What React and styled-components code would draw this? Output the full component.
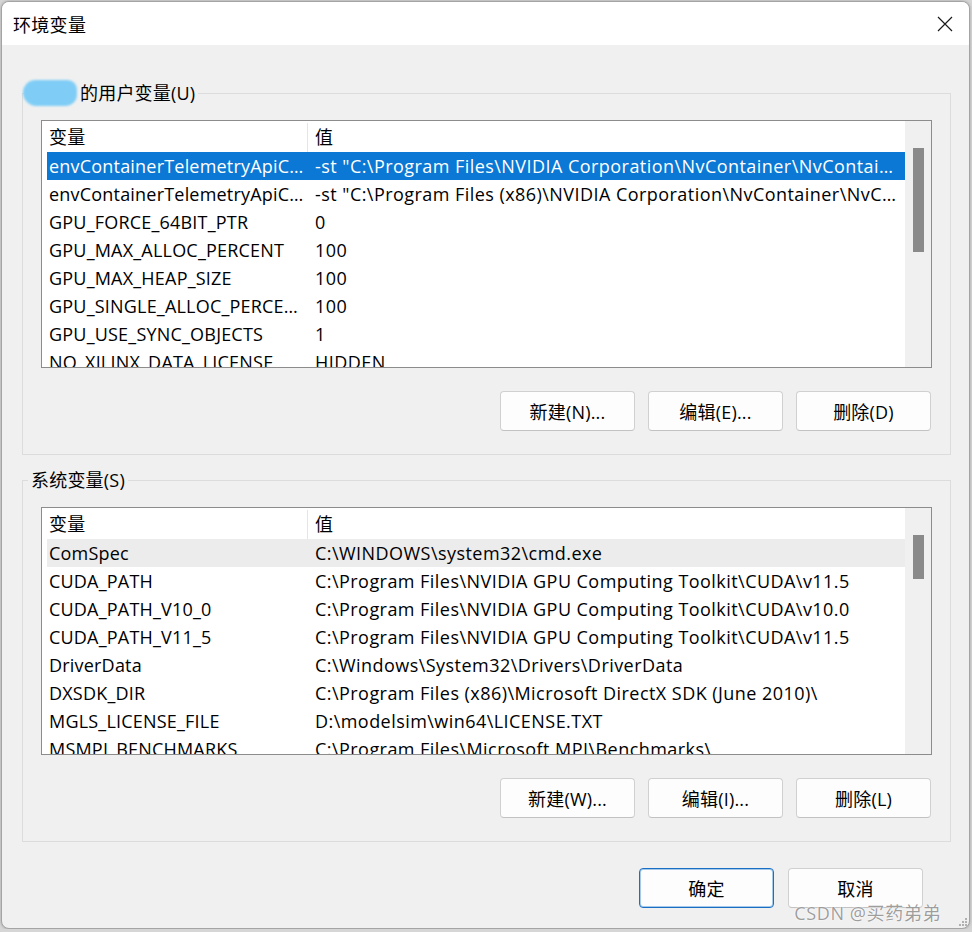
import React from "react";
import styled, { createGlobalStyle } from "styled-components";

const GlobalStyle = createGlobalStyle`
  html, body {
    margin: 0;
    padding: 0;
    background: #d6d6d6;
  }
  body {
    font-family: "Open Sans", "Noto Sans CJK SC", sans-serif;
    font-size: 18px;
    color: #000;
  }
  * { box-sizing: border-box; }
`;

const Window = styled.div`
  position: relative;
  margin: 1px 0 0 1px;
  width: 969px;
  height: 928px;
  border: 1px solid #a4a4a4;
  border-radius: 8px;
  overflow: hidden;
  background: #f0f0f0;
  display: flex;
  flex-direction: column;
  box-shadow: 0 0 3px rgba(0, 0, 0, 0.25);
`;

const TitleBar = styled.div`
  height: 43px;
  background: #fff;
  display: flex;
  align-items: center;
  justify-content: space-between;
  padding-left: 11px;
`;

const Title = styled.span`
  font-size: 18px;
  letter-spacing: 0.3px;
`;

const CloseButton = styled.div`
  width: 46px;
  height: 43px;
  display: flex;
  align-items: center;
  justify-content: center;
  margin-right: 1px;
`;

const Body = styled.div`
  flex: 1;
  display: flex;
  flex-direction: column;
  padding: 34px 18px 0 20px;
`;

const Group = styled.fieldset`
  margin: ${(p) => (p.$first ? "0" : "11px")} 0 0 0;
  padding: 0;
  border: 1px solid #dcdcdc;
  min-width: 0;
`;

const Legend = styled.legend`
  margin-left: 5px;
  padding: 0 3px;
  line-height: 28px;
  font-size: 18px;
  letter-spacing: 0.2px;
  display: flex;
  align-items: center;
`;

const Blur = styled.span`
  display: inline-block;
  width: 54px;
  height: 26px;
  margin-left: -8px;
  margin-right: 3px;
  border-radius: 13px 10px 12px 14px;
  background: #7fcdf6;
  filter: blur(1.2px);
`;

const GroupInner = styled.div`
  padding: 13px 18px 23px 18px;
`;

const List = styled.div`
  height: 248px;
  border: 1px solid #8c8c8c;
  background: #fff;
  display: flex;
  overflow: hidden;
`;

const ListBody = styled.div`
  flex: 1;
  min-width: 0;
  padding-left: 5px;
`;

const HeaderRow = styled.div`
  display: flex;
  height: 31px;
  padding-top: 2px;
  line-height: 29px;
`;

const Row = styled.div`
  display: flex;
  height: 28px;
  line-height: 28px;
  background: ${(p) =>
    p.$selected === "active" ? "#0a78d4" : p.$selected === "inactive" ? "#ececec" : "transparent"};
  color: ${(p) => (p.$selected === "active" ? "#fff" : "#000")};
`;

const NameCell = styled.div`
  width: 261px;
  flex-shrink: 0;
  padding: 0 3px 0 2px;
  white-space: nowrap;
  overflow: hidden;
  text-overflow: ellipsis;
  letter-spacing: 0.2px;
  border-right: ${(p) => (p.$header ? "1px solid #e5e5e5" : "none")};
`;

const ValueCell = styled.div`
  flex: 1;
  min-width: 0;
  padding: 0 2px 0 7px;
  white-space: nowrap;
  overflow: hidden;
  text-overflow: ellipsis;
  letter-spacing: 0.45px;
`;

const ScrollTrack = styled.div`
  width: 26px;
  flex-shrink: 0;
  background: #f0f0f0;
  padding: 27px 0 0 8px;
`;

const Thumb = styled.div`
  width: 11px;
  background: #8a8a8a;
`;

const ButtonRow = styled.div`
  display: flex;
  justify-content: flex-end;
  gap: ${(p) => p.$gap || 13}px;
  margin-top: ${(p) => p.$top || 23}px;
  padding-right: ${(p) => p.$right || 1}px;
`;

const Button = styled.div`
  width: 135px;
  height: 40px;
  border-radius: 4px;
  background: #fdfdfd;
  border: 1px solid ${(p) => (p.$primary ? "#1a6fc4" : "#d0d0d0")};
  border-bottom-color: ${(p) => (p.$primary ? "#1a6fc4" : "#c2c2c2")};
  box-shadow: ${(p) => (p.$primary ? "inset 0 0 0 1px rgba(0, 103, 192, 0.35)" : "none")};
  display: flex;
  align-items: center;
  justify-content: center;
  font-size: 18px;
  letter-spacing: 0.2px;
`;

const Watermark = styled.div`
  position: absolute;
  right: 28px;
  bottom: 3px;
  font-size: 18px;
  color: rgba(140, 140, 140, 0.85);
  text-shadow: 0 0 2px #fff, 0 0 1px #fff;
  letter-spacing: 0.6px;
`;

const Grip = styled.svg`
  position: absolute;
  right: 2px;
  bottom: 2px;
`;

const userVars = [
  ["envContainerTelemetryApiCommandLine", '-st "C:\\Program Files\\NVIDIA Corporation\\NvContainer\\NvContainerTelemetryApi.exe"'],
  ["envContainerTelemetryApiCommandLine_x86", '-st "C:\\Program Files (x86)\\NVIDIA Corporation\\NvContainer\\NvContainerTelemetryApi.exe"'],
  ["GPU_FORCE_64BIT_PTR", "0"],
  ["GPU_MAX_ALLOC_PERCENT", "100"],
  ["GPU_MAX_HEAP_SIZE", "100"],
  ["GPU_SINGLE_ALLOC_PERCENT", "100"],
  ["GPU_USE_SYNC_OBJECTS", "1"],
  ["NO_XILINX_DATA_LICENSE", "HIDDEN"],
];

const sysVars = [
  ["ComSpec", "C:\\WINDOWS\\system32\\cmd.exe"],
  ["CUDA_PATH", "C:\\Program Files\\NVIDIA GPU Computing Toolkit\\CUDA\\v11.5"],
  ["CUDA_PATH_V10_0", "C:\\Program Files\\NVIDIA GPU Computing Toolkit\\CUDA\\v10.0"],
  ["CUDA_PATH_V11_5", "C:\\Program Files\\NVIDIA GPU Computing Toolkit\\CUDA\\v11.5"],
  ["DriverData", "C:\\Windows\\System32\\Drivers\\DriverData"],
  ["DXSDK_DIR", "C:\\Program Files (x86)\\Microsoft DirectX SDK (June 2010)\\"],
  ["MGLS_LICENSE_FILE", "D:\\modelsim\\win64\\LICENSE.TXT"],
  ["MSMPI_BENCHMARKS", "C:\\Program Files\\Microsoft MPI\\Benchmarks\\"],
];

const VarList = ({ rows, selected, selectedKind, thumbHeight }) => (
  <List>
    <ListBody>
      <HeaderRow>
        <NameCell $header>变量</NameCell>
        <ValueCell>值</ValueCell>
      </HeaderRow>
      {rows.map(([name, value], i) => (
        <Row key={i} $selected={i === selected ? selectedKind : undefined}>
          <NameCell>{name}</NameCell>
          <ValueCell>{value}</ValueCell>
        </Row>
      ))}
    </ListBody>
    <ScrollTrack>
      <Thumb style={{ height: thumbHeight }} />
    </ScrollTrack>
  </List>
);

const App = () => {
  return (
    <>
      <GlobalStyle />
      <Window>
        <TitleBar>
          <Title>环境变量</Title>
          <CloseButton>
            <svg width="16" height="16" viewBox="0 0 16 16">
              <path d="M1 1 L15 15 M15 1 L1 15" stroke="#1a1a1a" strokeWidth="1.2" fill="none" />
            </svg>
          </CloseButton>
        </TitleBar>
        <Body>
          <Group $first>
            <Legend>
              <Blur />
              的用户变量(U)
            </Legend>
            <GroupInner>
              <VarList rows={userVars} selected={0} selectedKind="active" thumbHeight={104} />
              <ButtonRow>
                <Button>新建(N)...</Button>
                <Button>编辑(E)...</Button>
                <Button>删除(D)</Button>
              </ButtonRow>
            </GroupInner>
          </Group>
          <Group>
            <Legend>系统变量(S)</Legend>
            <GroupInner>
              <VarList rows={sysVars} selected={0} selectedKind="inactive" thumbHeight={44} />
              <ButtonRow>
                <Button>新建(W)...</Button>
                <Button>编辑(I)...</Button>
                <Button>删除(L)</Button>
              </ButtonRow>
            </GroupInner>
          </Group>
          <ButtonRow $top={26} $gap={14} $right={28}>
            <Button $primary>确定</Button>
            <Button>取消</Button>
          </ButtonRow>
        </Body>
        <Watermark>CSDN @买药弟弟</Watermark>
        <Grip width="8" height="8" viewBox="0 0 8 8">
          <rect x="6" y="0" width="2" height="2" fill="#b0b0b0" />
          <rect x="3" y="3" width="2" height="2" fill="#b0b0b0" />
          <rect x="6" y="3" width="2" height="2" fill="#b0b0b0" />
          <rect x="0" y="6" width="2" height="2" fill="#b0b0b0" />
          <rect x="3" y="6" width="2" height="2" fill="#b0b0b0" />
          <rect x="6" y="6" width="2" height="2" fill="#b0b0b0" />
        </Grip>
      </Window>
    </>
  );
};

export default App;
